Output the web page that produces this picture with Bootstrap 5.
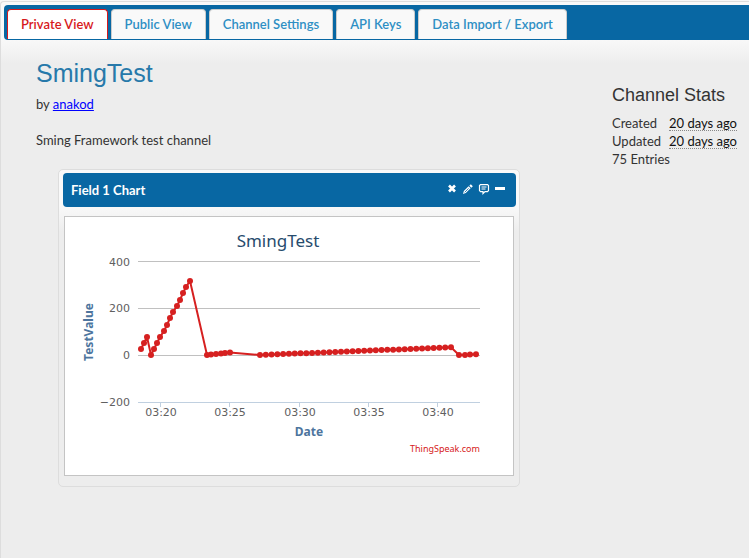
<!DOCTYPE html>
<html lang="en">
<head>
<meta charset="utf-8">
<meta name="viewport" content="width=device-width, initial-scale=1">
<title>SmingTest - ThingSpeak</title>
<link href="https://cdn.jsdelivr.net/npm/bootstrap@5.3.0/dist/css/bootstrap.min.css" rel="stylesheet">
<style>
body { background: #f7f7f7; color: #333; font: 13px/18px "Trebuchet MS", Lato, sans-serif; }
.panel { margin-top: 1px; padding: 3px 0 0 3px; border: 1px solid #ddd; border-width: 1px 0 0 1px; border-top-left-radius: 4px; min-height: calc(100vh - 1px);
  background: #ededed linear-gradient(#f9f9f9 36px, #ededed 62px) no-repeat; }
.tabs { background: #0867a3; border-radius: 4px 0 0 4px; padding: 4px 3px 1px; gap: 3px; flex-wrap: nowrap; white-space: nowrap; }
.tabs .nav-link { padding: 5px 13px 6px; border: 1px solid #ccc; border-bottom: 0; border-radius: 4px 4px 0 0; background: #f9f9f9; color: #2e8fc4; font-weight: 600; line-height: 18px; }
.tabs .nav-link.active { border-color: #d7191c; background: #fff; color: #d7191c; }
.content-row { padding: 17px 12px 0 32px; }
h1, h2 { font-family: "Liberation Sans", Arial, sans-serif; font-weight: 400; }
h1 { color: #2779aa; font-size: 25px; line-height: 32px; margin: 0 0 6px; }
h2 { font-size: 18px; line-height: 24px; margin: 26px 0 7px; }
.author, .author:hover { color: #00f; }
.about { margin: 18px 0 0; }
.stats { width: 125px; }
.stats td { padding: 0; white-space: nowrap; }
.stats abbr { color: #111; text-decoration: none; border-bottom: 1px dotted #888; cursor: help; line-height: 14px; display: inline-block; }
.widget { max-width: 462px; margin: 20px 0 0 22px; padding: 3px 3px 10px 4px; border: 1px solid #ddd; border-radius: 5px; background: #ededed linear-gradient(#f9f9f9, #f9f9f9 36px, #ededed 62px) no-repeat; }
.widget-head { background: #0867a3; color: #fff; border-radius: 4px; font-weight: 700; padding: 8px 10px 8px 8px; }
.tool { border: 0; padding: 0; background: none; color: #fff; line-height: 0; }
.plot { margin: 9px 2px 0 1px; border: 1px solid #c4c4c4; background: #fff; }
.plot svg { display: block; width: 100%; height: auto; font-family: "Lucida Grande", "Noto Sans", sans-serif; }
.plot .ticks { font-family: "Lucida Grande", "DejaVu Sans", sans-serif; font-size: 11px; }
.plot a { text-decoration: none; }
</style>
</head>
<body>
<main class="panel">
  <nav class="nav tabs" aria-label="Channel">
    <a class="nav-link active" aria-current="page" href="#">Private View</a>
    <a class="nav-link" href="#">Public View</a>
    <a class="nav-link" href="#">Channel Settings</a>
    <a class="nav-link" href="#">API Keys</a>
    <a class="nav-link" href="#">Data Import / Export</a>
  </nav>
  <div class="content-row d-flex justify-content-between">
    <section class="flex-grow-1">
      <h1>SmingTest</h1>
      <p class="mb-0">by <a class="author" href="#">anakod</a></p>
      <p class="about">Sming Framework test channel</p>
      <article class="widget">
        <header class="widget-head d-flex justify-content-between align-items-center">
          <span>Field 1 Chart</span>
          <span class="d-flex align-items-center gap-1">
            <button class="tool" type="button" aria-label="Delete"><svg width="12" height="12" viewBox="0 0 12 12"><path d="M3 1.500l6 6M9 1.500l-6 6" stroke="currentColor" stroke-width="2.6"/></svg></button>
            <button class="tool" type="button" aria-label="Edit"><svg width="12" height="12" viewBox="0 0 12 12"><path d="M1 10l.8-3 4.800-4.800 2 2-4.800 4.800z" fill="currentColor"/><path d="M2.700 8.300l4-4" stroke="#0867a3" stroke-width=".8"/><path d="M7.300 1.700l1.500-1.500 2 2-1.500 1.500z" fill="currentColor"/></svg></button>
            <button class="tool" type="button" aria-label="Comment"><svg width="12" height="12" viewBox="0 0 12 12"><path d="M2.500 .6h7l1 1v5l-1 1H7L5 9.600v-2H2.500l-1-1v-5z" fill="none" stroke="currentColor" stroke-width="1.2"/><path d="M3.500 3h5M3.500 5h4" stroke="currentColor"/></svg></button>
            <button class="tool" type="button" aria-label="Minimize"><svg width="12" height="12" viewBox="0 0 12 12"><path d="M1 3h10v3H1z" fill="currentColor"/></svg></button>
          </span>
        </header>
        <div class="plot">
          <svg viewBox="65 217 448 258" role="img" aria-label="TestValue by date">
            <path d="M138 261.500H480M138 308.500H480M138 355.500H480" stroke="#c0c0c0"/>
            <path d="M138 402.500H480M160.500 403v4M229.500 403v4M299.500 403v4M368.500 403v4M437.500 403v4" stroke="#c0d0e0" fill="none"/>
            <text x="278" y="247" text-anchor="middle" font-size="17" fill="#274b6d">SmingTest</text>
            <g class="ticks" fill="#606060" text-anchor="end"><text x="130" y="266">400</text><text x="130" y="312">200</text><text x="130" y="359">0</text><text x="130" y="406">−200</text></g>
            <g class="ticks" fill="#606060" text-anchor="middle"><text x="161" y="416">03:20</text><text x="230" y="416">03:25</text><text x="300" y="416">03:30</text><text x="369" y="416">03:35</text><text x="438" y="416">03:40</text></g>
            <g font-size="12" font-weight="700" fill="#4d759e" text-anchor="middle"><text x="309" y="436">Date</text><text transform="translate(93 332) rotate(-90)">TestValue</text></g>
            <a href="#"><text x="480" y="452" text-anchor="end" font-size="9" fill="#d62020">ThingSpeak.com</text></a>
            <g id="series" fill="#d62020"></g>
          </svg>
        </div>
      </article>
    </section>
    <aside class="stats flex-shrink-0">
      <h2>Channel Stats</h2>
      <table class="w-100">
        <tbody>
          <tr><td>Created</td><td class="text-end"><abbr title="Creation date">20 days ago</abbr></td></tr>
          <tr><td>Updated</td><td class="text-end"><abbr title="Last update">20 days ago</abbr></td></tr>
          <tr><td colspan="2">75 Entries</td></tr>
        </tbody>
      </table>
    </aside>
  </div>
</main>
<script src="https://cdn.jsdelivr.net/npm/bootstrap@5.3.0/dist/js/bootstrap.bundle.min.js"></script>
<script>
const points = [[141,349],[144,343],[147,337],[151,355],[154,349],[157,343],[160,337],[164,331],[167,325],[170,318],[173,312],[177,306],[180,300],[183,293],[186,287],[190,281],[207,355],[211,354.600],[216,354],[221,353.600],[225,353],[230,352.500]];
for (let i = 0; i < 34; i++) points.push([260 + i * 191 / 33, 355 - i * 7.7 / 33]);
points.push([459,355],[465,355],[470,354.600],[476,354.300]);
const line = '<polyline fill="none" stroke="#d62020" stroke-width="2" points="' + points.map(p => p.join()).join(' ') + '"/>';
document.getElementById('series').innerHTML = line + points.map(p => `<circle cx="${p[0]}" cy="${p[1]}" r="3"/>`).join('');
</script>
</body>
</html>
